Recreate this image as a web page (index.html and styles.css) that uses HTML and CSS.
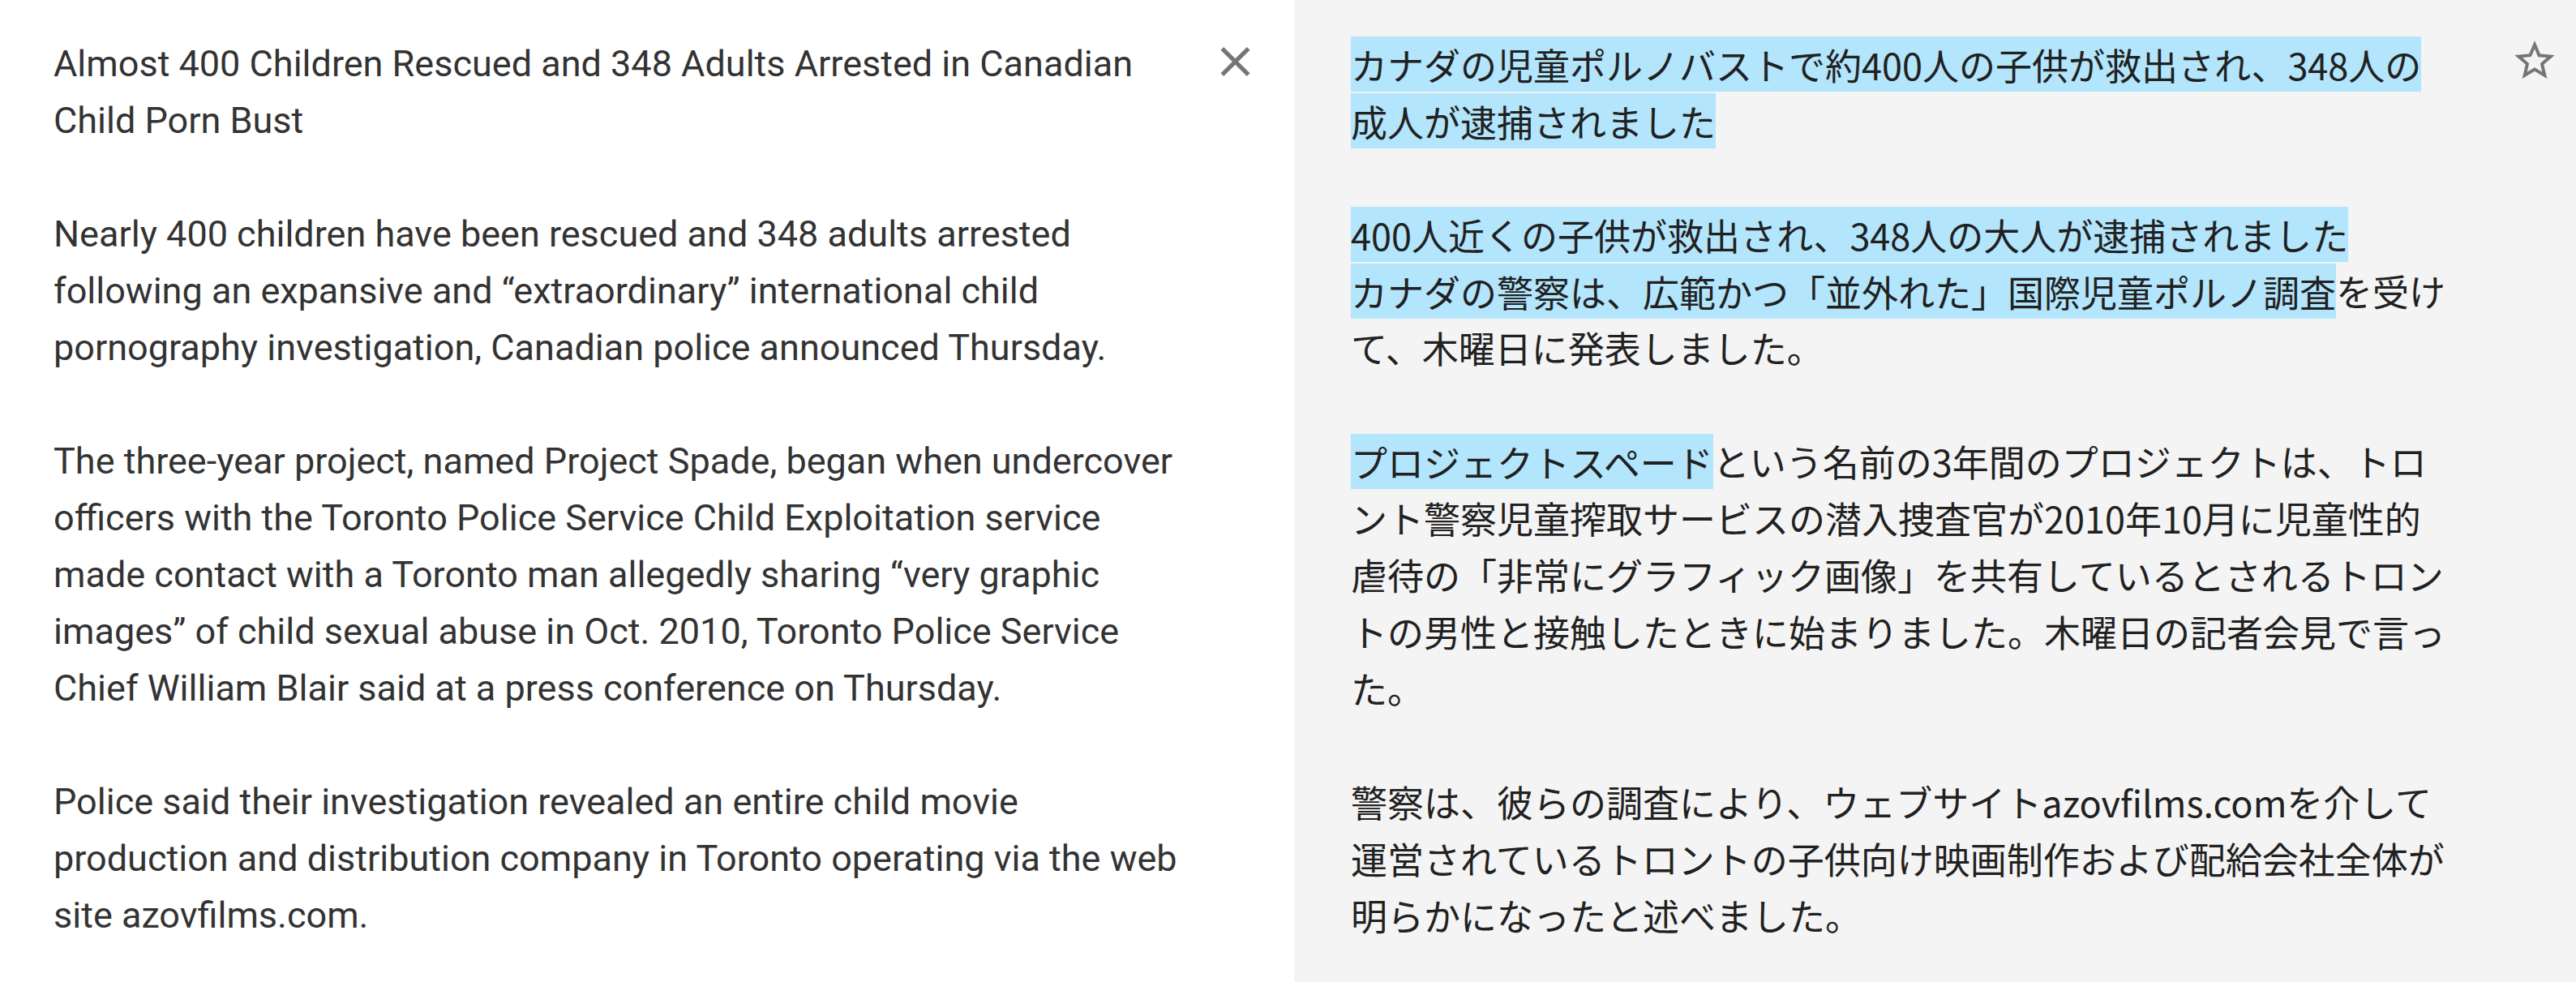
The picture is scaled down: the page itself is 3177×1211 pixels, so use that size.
FILE: index.html
```html
<!DOCTYPE html>
<html>
<head>
	<meta charset="utf-8">
	<title>Translation</title>
	<link rel="stylesheet" href="styles.css">
</head>
<body>

	<div class="split">
		<!-- source text -->
		<section class="pane source">
			<div class="text">
				<p>Almost 400 Children Rescued and 348 Adults Arrested in Canadian Child Porn Bust</p>
				<p>Nearly 400 children have been rescued and 348 adults arrested following an expansive and “extraordinary” international child pornography investigation, Canadian police announced Thursday.</p>
				<p>The three-year project, named Project Spade, began when undercover officers with the Toronto Police Service Child Exploitation service made contact with a Toronto man allegedly sharing “very graphic images” of child sexual abuse in Oct. 2010, Toronto Police Service Chief William Blair said at a press conference on Thursday.</p>
				<p>Police said their investigation revealed an entire child movie production and distribution company in Toronto operating via the web site azovfilms.com.</p>
			</div>
			<button class="icon close" title="Clear">
				<svg viewBox="5 5 14 14" width="37" height="36"><path d="M19 6.41L17.59 5 12 10.59 6.41 5 5 6.41 10.59 12 5 17.59 6.41 19 12 13.41 17.59 19 19 17.59 13.41 12z"/></svg>
			</button>
		</section>

		<!-- translated text -->
		<section class="pane target">
			<div class="text">
				<p><span class="hl">カナダの児童ポルノバストで約400人の子供が救出され、348人の成人が逮捕されました</span></p>
				<p><span class="hl">400人近くの子供が救出され、348人の大人が逮捕されました</span><br><span class="hl">カナダの警察は、広範かつ「並外れた」国際児童ポルノ調査</span>を受けて、木曜日に発表しました。</p>
				<p><span class="hl">プロジェクトスペード</span>という名前の3年間のプロジェクトは、トロント警察児童搾取サービスの潜入捜査官が2010年10月に児童性的虐待の「非常にグラフィック画像」を共有しているとされるトロントの男性と接触したときに始まりました。木曜日の記者会見で言った。</p>
				<p>警察は、彼らの調査により、ウェブサイトazovfilms.comを介して運営されているトロントの子供向け映画制作および配給会社全体が明らかになったと述べました。</p>
			</div>
			<button class="icon star" title="Save">
				<svg viewBox="2 2 20 19" width="50" height="47"><path d="M22 9.24l-7.19-.62L12 2 9.19 8.63 2 9.24l5.46 4.73L5.82 21 12 17.27 18.18 21l-1.63-7.03L22 9.24zM12 15.4l-3.76 2.27 1-4.28-3.32-2.88 4.38-.38L12 6.1l1.71 4.04 4.38.38-3.32 2.88 1 4.28L12 15.4z"/></svg>
			</button>
		</section>
	</div>

</body>
</html>
```

FILE: styles.css
```css
	body {
		margin: 0;
		font-family: Roboto, "Noto Sans CJK JP", sans-serif;
		font-size: 45px;
		line-height: 70px;
	}
	.split {
		display: flex;
		min-height: 100vh;
	}
	.pane {
		display: flex;
		align-items: flex-start;
		box-sizing: border-box;
		padding-top: 44px;
	}
	.pane p {
		margin: 0 0 70px;
	}
	.source {
		width: 1596px;
		padding-left: 66px;
		background: #fff;
		color: #333;
	}
	.source .text {
		width: 1404px;
	}
	.target {
		flex: 1;
		padding-left: 70px;
		background: #f4f4f4;
		color: #212121;
		font-family: "Noto Sans CJK JP", Roboto, sans-serif;
	}
	.target .text {
		width: 1358px;
	}
	.hl {
		background: #b3e5fc;
		padding: 1.5px 0;
	}
	.icon {
		border: 0;
		padding: 0;
		background: none;
		fill: #757575;
		line-height: 0;
	}
	.close {
		margin: 14px 0 0 35px;
	}
	.star {
		margin: 6px 0 0 77px;
	}
```
